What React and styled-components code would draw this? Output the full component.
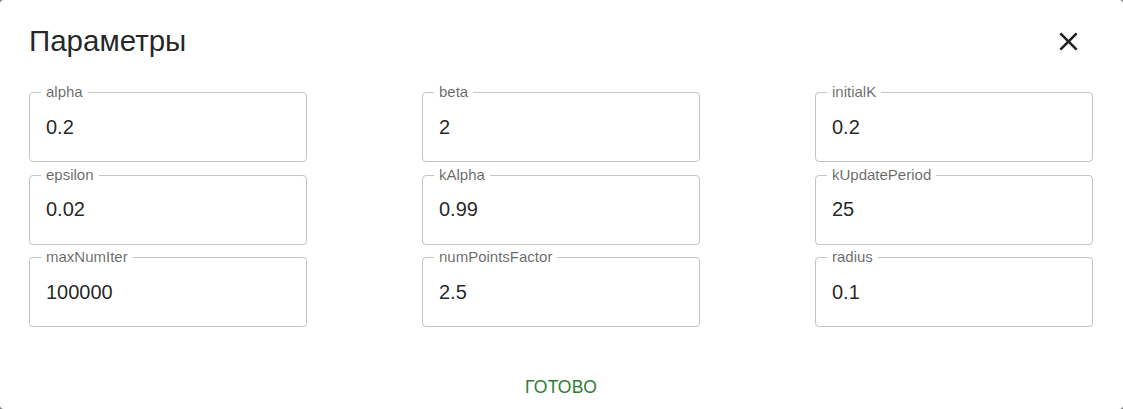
import styled, { createGlobalStyle } from 'styled-components';

const params = [
  { name: 'alpha', value: '0.2' },
  { name: 'beta', value: '2' },
  { name: 'initialK', value: '0.2' },
  { name: 'epsilon', value: '0.02' },
  { name: 'kAlpha', value: '0.99' },
  { name: 'kUpdatePeriod', value: '25' },
  { name: 'maxNumIter', value: '100000' },
  { name: 'numPointsFactor', value: '2.5' },
  { name: 'radius', value: '0.1' },
];

const GlobalStyle = createGlobalStyle`
  html, body {
    margin: 0;
    padding: 0;
    background: #7f7f7f;
    font-family: "Liberation Sans", Arial, sans-serif;
  }
  * {
    box-sizing: border-box;
  }
`;

const App = () => {
  return (
    <>
      <GlobalStyle />
      <Dialog>
        <Header>
          <h2 className='title'>Параметры</h2>
          <CloseButton aria-label='close'>
            <svg viewBox='0 0 24 24' width='31' height='31'>
              <path
                fill='currentColor'
                d='M19 6.41 17.59 5 12 10.59 6.41 5 5 6.41 10.59 12 5 17.59 6.41 19 12 13.41 17.59 19 19 17.59 13.41 12z'
              />
            </svg>
          </CloseButton>
        </Header>
        <Grid>
          {params.map((p) => {
            const { name, value } = p;
            return (
              <Field key={name}>
                <span className='label'>{name}</span>
                <input className='value' defaultValue={value} />
              </Field>
            );
          })}
        </Grid>
        <Footer>
          <DoneButton>Готово</DoneButton>
        </Footer>
      </Dialog>
    </>
  );
};

const Dialog = styled.div`
  width: 100vw;
  height: 100vh;
  background: #ffffff;
  border-radius: 4px;
  padding: 0 30px 0 29px;
  display: flex;
  flex-direction: column;
  overflow: hidden;
`;

const Header = styled.header`
  height: 82px;
  display: flex;
  align-items: center;
  justify-content: space-between;
  .title {
    margin: 0;
    font-size: 29.5px;
    font-weight: 400;
    line-height: 1;
    color: rgba(0, 0, 0, 0.87);
  }
`;

const CloseButton = styled.button`
  border: none;
  background: none;
  padding: 0;
  margin-right: 9px;
  display: flex;
  color: rgba(0, 0, 0, 0.87);
  cursor: pointer;
`;

const Grid = styled.div`
  margin-top: 10px;
  display: grid;
  grid-template-columns: repeat(3, 278px);
  justify-content: space-between;
  row-gap: 12.5px;
`;

const Field = styled.label`
  position: relative;
  height: 70px;
  border: 1px solid #c4c4c4;
  border-radius: 4px;
  display: flex;
  align-items: center;
  .label {
    position: absolute;
    top: -10px;
    left: 11px;
    padding: 0 5px;
    background: #ffffff;
    font-size: 15px;
    line-height: 18px;
    color: rgba(0, 0, 0, 0.6);
  }
  .value {
    width: 100%;
    border: none;
    outline: none;
    background: transparent;
    padding: 0 16px;
    font-family: inherit;
    font-size: 20px;
    color: rgba(0, 0, 0, 0.87);
  }
`;

const Footer = styled.footer`
  margin-top: 42px;
  display: flex;
  justify-content: center;
`;

const DoneButton = styled.button`
  height: 36px;
  padding: 0 10px;
  border: none;
  background: none;
  font-family: inherit;
  font-size: 17.5px;
  letter-spacing: 0.3px;
  text-transform: uppercase;
  color: #2e7d32;
  cursor: pointer;
`;

export default App;
